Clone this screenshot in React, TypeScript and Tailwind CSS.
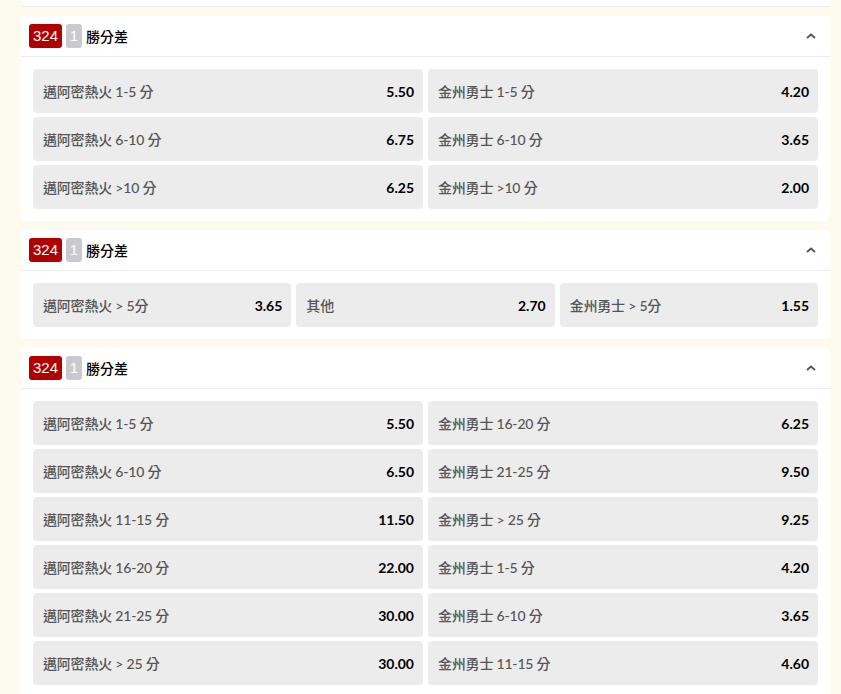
import React from 'react';

type Odd = { label: string; price: string };

const font = { fontFamily: 'Lato, "Noto Sans CJK TC", sans-serif' };

const markets: { cols: 2 | 3; odds: Odd[] }[] = [
  {
    cols: 2,
    odds: [
      { label: '邁阿密熱火 1-5 分', price: '5.50' },
      { label: '金州勇士 1-5 分', price: '4.20' },
      { label: '邁阿密熱火 6-10 分', price: '6.75' },
      { label: '金州勇士 6-10 分', price: '3.65' },
      { label: '邁阿密熱火 >10 分', price: '6.25' },
      { label: '金州勇士 >10 分', price: '2.00' },
    ],
  },
  {
    cols: 3,
    odds: [
      { label: '邁阿密熱火 > 5分', price: '3.65' },
      { label: '其他', price: '2.70' },
      { label: '金州勇士 > 5分', price: '1.55' },
    ],
  },
  {
    cols: 2,
    odds: [
      { label: '邁阿密熱火 1-5 分', price: '5.50' },
      { label: '金州勇士 16-20 分', price: '6.25' },
      { label: '邁阿密熱火 6-10 分', price: '6.50' },
      { label: '金州勇士 21-25 分', price: '9.50' },
      { label: '邁阿密熱火 11-15 分', price: '11.50' },
      { label: '金州勇士 > 25 分', price: '9.25' },
      { label: '邁阿密熱火 16-20 分', price: '22.00' },
      { label: '金州勇士 1-5 分', price: '4.20' },
      { label: '邁阿密熱火 21-25 分', price: '30.00' },
      { label: '金州勇士 6-10 分', price: '3.65' },
      { label: '邁阿密熱火 > 25 分', price: '30.00' },
      { label: '金州勇士 11-15 分', price: '4.60' },
    ],
  },
];

const ChevronUp = () => (
  <svg width="10" height="6" viewBox="0 0 10 6" className="mr-[6px]">
    <path d="M1 5 L5 1.5 L9 5" fill="none" stroke="#555" strokeWidth="1.8" />
  </svg>
);

const MarketCard: React.FC<{ cols: 2 | 3; odds: Odd[] }> = ({ cols, odds }) => (
  <div className="bg-white rounded-[4px] mt-[9px]">
    {/* Header */}
    <div className="h-[41px] flex items-center justify-between px-[8px] border-b border-[#ebebf2]">
      <div className="flex items-center">
        <span
          className="h-[24px] px-[4px] rounded-[3px] bg-[#b00000] text-white text-[15px] leading-[24px]"
          style={{ fontFamily: '"Liberation Sans", Arial, sans-serif' }}
        >
          324
        </span>
        <span
          className="ml-[4px] h-[24px] w-[16px] rounded-[3px] bg-[#c9c9cf] text-white text-[15px] leading-[24px] text-center"
          style={{ fontFamily: '"Liberation Sans", Arial, sans-serif' }}
        >
          1
        </span>
        <span className="ml-[4px] text-[14px] text-black font-medium" style={font}>
          勝分差
        </span>
      </div>
      <ChevronUp />
    </div>

    {/* Odds */}
    <div className={`grid gap-x-[5px] gap-y-[4px] p-[12px] ${cols === 3 ? 'grid-cols-3' : 'grid-cols-2'}`}>
      {odds.map((o, i) => (
        <div
          key={i}
          className="h-[44px] rounded-[4px] bg-[#ececec] flex items-center justify-between pl-[10px] pr-[9px]"
          style={font}
        >
          <span className="text-[14px] text-[#555] font-medium tracking-[-0.2px]">{o.label}</span>
          <span className="text-[14px] text-black font-bold">{o.price}</span>
        </div>
      ))}
    </div>
  </div>
);

export default function App() {
  return (
    <div className="min-h-[694px] bg-[#fdfaee] pl-[21px] pr-[11px] overflow-hidden">
      <div className="h-[7px] bg-white border-b border-[#ebebf2]" />
      {markets.map((m, i) => (
        <MarketCard key={i} cols={m.cols} odds={m.odds} />
      ))}
    </div>
  );
}
